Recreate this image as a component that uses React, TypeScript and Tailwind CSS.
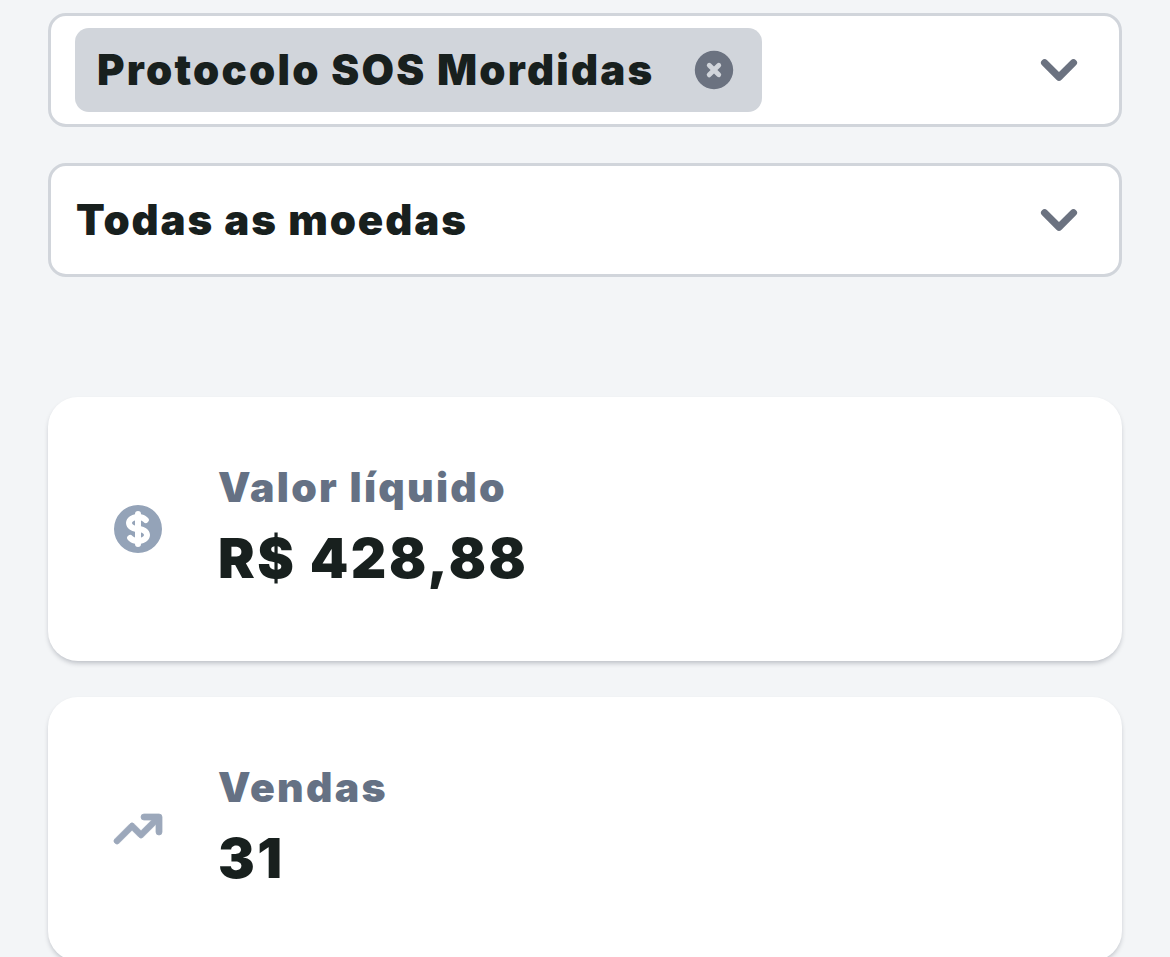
import React, { ReactNode } from 'react';

const Chevron = () => (
  <svg className="w-[72px] h-[72px] text-[#6b7280]" viewBox="0 0 20 20" fill="currentColor">
    <path fillRule="evenodd" d="M5.293 7.293a1 1 0 0 1 1.414 0L10 10.586l3.293-3.293a1 1 0 1 1 1.414 1.414l-4 4a1 1 0 0 1-1.414 0l-4-4a1 1 0 0 1 0-1.414z" clipRule="evenodd" />
  </svg>
);

const SelectBox: React.FC<{ children: ReactNode }> = ({ children }) => (
  <div className="flex items-center justify-between h-[114px] bg-white border-[3px] border-[#d1d5db] rounded-[18px] pl-[24px] pr-[24px]">
    {children}
    <Chevron />
  </div>
);

const DollarIcon = () => (
  <svg className="w-[60px] h-[60px] text-[#94a3b8]" viewBox="0 0 20 20" fill="currentColor">
    <path d="M8.433 7.418c.155-.103.346-.196.567-.267v1.698a2.305 2.305 0 0 1-.567-.267C8.07 8.34 8 8.114 8 8c0-.114.07-.34.433-.582zM11 12.849v-1.698c.22.071.412.164.567.267.364.243.433.468.433.582 0 .114-.07.34-.433.582a2.305 2.305 0 0 1-.567.267z" />
    <path fillRule="evenodd" d="M10 18a8 8 0 1 0 0-16 8 8 0 0 0 0 16zm1-13a1 1 0 1 0-2 0v.092a4.535 4.535 0 0 0-1.676.662C6.602 6.234 6 7.009 6 8c0 .99.602 1.765 1.324 2.246.48.32 1.054.545 1.676.662v1.941c-.391-.127-.68-.317-.843-.504a1 1 0 1 0-1.51 1.31c.562.649 1.413 1.076 2.353 1.253V15a1 1 0 1 0 2 0v-.092a4.535 4.535 0 0 0 1.676-.662C13.398 13.766 14 12.991 14 12c0-.99-.602-1.765-1.324-2.246A4.535 4.535 0 0 0 11 9.092V7.151c.391.127.68.317.843.504a1 1 0 1 0 1.511-1.31c-.563-.649-1.413-1.076-2.354-1.253V5z" clipRule="evenodd" />
  </svg>
);

const TrendIcon = () => (
  <svg className="w-[60px] h-[60px] text-[#9ca8bb]" viewBox="0 0 20 20" fill="currentColor" stroke="currentColor" strokeWidth="0.25">
    <path fillRule="evenodd" d="M12 7a1 1 0 1 1 0-2h5a1 1 0 0 1 1 1v5a1 1 0 1 1-2 0V8.414l-4.293 4.293a1 1 0 0 1-1.414 0L8 10.414l-4.293 4.293a1 1 0 0 1-1.414-1.414l5-5a1 1 0 0 1 1.414 0L11 10.586 14.586 7H12z" clipRule="evenodd" />
  </svg>
);

const StatCard: React.FC<{ icon: ReactNode; label: string; value: string; className?: string }> = ({ icon, label, value, className = '' }) => (
  <div className={`flex items-center bg-white rounded-[30px] shadow-[0_3px_5px_-1px_rgba(15,23,42,0.25)] pl-[60px] ${className}`}>
    <div className="shrink-0 w-[60px] flex justify-center">{icon}</div>
    <div className="ml-[50px] -mt-[4px] flex flex-col">
      <div className="text-[41px] leading-[60px] font-black tracking-[0.055em] text-[#657184]">{label}</div>
      <div className="mt-[2px] text-[55px] leading-[78px] font-black tracking-[0.045em] text-[#18201e]">{value}</div>
    </div>
  </div>
);

export default function App() {
  return (
    <div className="h-[957px] overflow-hidden bg-[#f3f5f7] px-[48px] pt-[13px] font-['Inter',sans-serif] text-[#18201e]">
      <SelectBox>
        <div className="flex items-center h-[84px] w-[687px] bg-[#d1d5db] rounded-[14px] pl-[22px]">
          <span className="-mt-[1px] text-[42px] font-black tracking-[0.053em] whitespace-nowrap">Protocolo SOS Mordidas</span>
          <svg className="ml-auto mr-[24px] w-[48px] h-[48px] text-[#6b7280]" viewBox="0 0 20 20" fill="currentColor">
            <path fillRule="evenodd" d="M10 18a8 8 0 1 0 0-16 8 8 0 0 0 0 16zM8.707 7.293a1 1 0 0 0-1.414 1.414L8.586 10l-1.293 1.293a1 1 0 1 0 1.414 1.414L10 11.414l1.293 1.293a1 1 0 0 0 1.414-1.414L11.414 10l1.293-1.293a1 1 0 0 0-1.414-1.414L10 8.586 8.707 7.293z" clipRule="evenodd" />
          </svg>
        </div>
      </SelectBox>
      <div className="mt-[36px]">
        <SelectBox>
          <span className="-mt-[1px] pl-[1px] text-[42px] font-black tracking-[0.045em]">Todas as moedas</span>
        </SelectBox>
      </div>
      <StatCard className="mt-[120px] h-[264px]" icon={<DollarIcon />} label="Valor líquido" value="R$ 428,88" />
      <StatCard className="mt-[36px] h-[264px]" icon={<TrendIcon />} label="Vendas" value="31" />
    </div>
  );
}
